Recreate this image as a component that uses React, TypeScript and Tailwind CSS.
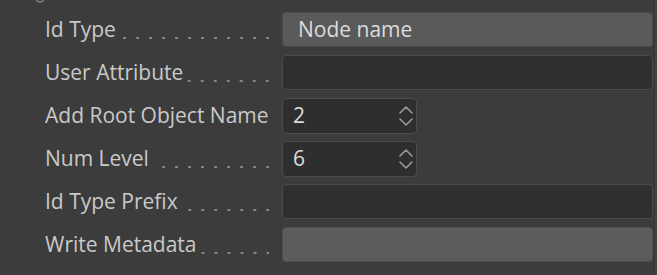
type Row = {
  label: string
  kind: "select" | "text" | "number" | "disabled"
  value?: string
}

const rows: Row[] = [
  { label: "Id Type", kind: "select", value: "Node name" },
  { label: "User Attribute", kind: "text" },
  { label: "Add Root Object Name", kind: "number", value: "2" },
  { label: "Num Level", kind: "number", value: "6" },
  { label: "Id Type Prefix", kind: "text" },
  { label: "Write Metadata", kind: "disabled" },
]

function Chevron({ up }: { up?: boolean }) {
  return (
    <svg width="14" height="8" viewBox="0 0 14 8" fill="none" stroke="#9a9a9a" strokeWidth="1.6" strokeLinecap="round" strokeLinejoin="round">
      <polyline points={up ? "1,7 7,1 13,7" : "1,1 7,7 13,1"} />
    </svg>
  )
}

function Field({ row }: { row: Row }) {
  if (row.kind === "select") {
    return (
      <div className="h-[35px] flex-1 rounded-[4px] bg-[#5a5a5a] border border-[#4a4a4a] flex items-center pl-[15px] text-[#dcdcdc]">
        {row.value}
      </div>
    )
  }
  if (row.kind === "number") {
    return (
      <div className="h-[36px] w-[135px] rounded-[4px] bg-[#2e2e2e] border border-[#4b4b4b] flex items-center pl-[10px] pr-[3px] text-[#dcdcdc]">
        <span className="flex-1">{row.value}</span>
        <div className="flex flex-col items-center gap-[4px]">
          <Chevron up />
          <Chevron />
        </div>
      </div>
    )
  }
  if (row.kind === "disabled") {
    return <div className="h-[35px] flex-1 rounded-[4px] bg-[#5c5c5c] border border-[#4e4e4e]" />
  }
  return <div className="h-[35px] flex-1 rounded-[4px] bg-[#2f2f2f] border border-[#4b4b4b]" />
}

export default function App() {
  return (
    <div
      className="relative w-[657px] h-[275px] bg-[#3c3c3c] overflow-hidden text-[21px] text-[#c9c9c9]"
      style={{ fontFamily: "'Open Sans', 'Noto Sans', sans-serif" }}
    >
      {/* clipped bit of the row above */}
      <svg className="absolute left-[34px] -top-[6px]" width="12" height="10" viewBox="0 0 12 10">
        <circle cx="6" cy="4" r="4" fill="none" stroke="#8a8a8a" strokeWidth="1.5" />
      </svg>

      <div className="flex flex-col gap-[8px] pt-[12px] pl-[45px] pr-[4px]">
        {rows.map((row) => (
          <div key={row.label} className="flex items-center h-[35px]">
            <div className="w-[237px] flex items-center pr-[13px]">
              <span className="whitespace-nowrap leading-none">{row.label}</span>
              <span className="flex-1 self-end mb-[1px] ml-[4px] h-[2px] bg-[linear-gradient(to_right,transparent_10px,#858585_10px)] bg-[length:13px_2px] bg-right bg-repeat-x" />
            </div>
            <Field row={row} />
          </div>
        ))}
      </div>

      {/* right edge panel border */}
      <div className="absolute right-0 top-0 bottom-0 w-[3px] bg-[#444444] border-l border-[#353535]" />
    </div>
  )
}
